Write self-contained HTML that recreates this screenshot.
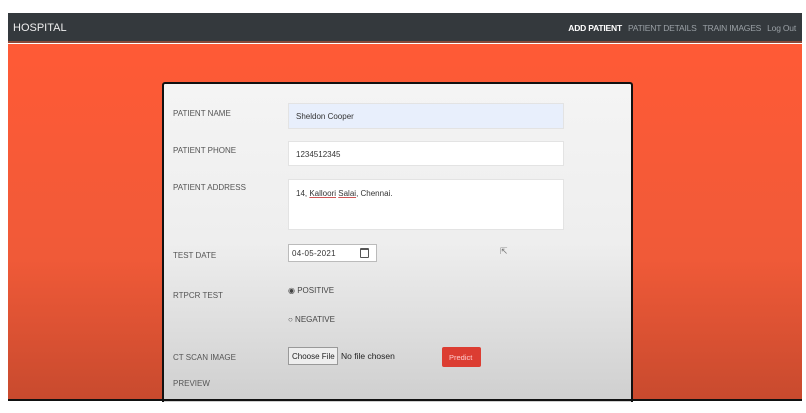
<!DOCTYPE html>
<html><head><style>
*{margin:0;padding:0;box-sizing:border-box}
body{width:806px;height:413px;background:#fff;position:relative;overflow:hidden;font-family:"Liberation Sans",sans-serif}
.nav{position:absolute;left:8px;top:13px;width:794px;height:30px;background:#34393d;border-bottom:2px solid #8a4a3a}
.brand{position:absolute;left:5px;top:9px;color:#eee;font-size:11px}
.links{position:absolute;right:6px;top:10px;font-size:8.5px;color:#9aa0a5;letter-spacing:-0.2px;white-space:nowrap}
.links span{margin-left:6px}
.links b{color:#fff;font-weight:bold}
.bg{position:absolute;left:8px;top:44px;width:794px;height:356px;background:linear-gradient(#ff5a36,#f05a38 60%,#c84a2e)}
.line{position:absolute;left:8px;top:399px;width:794px;height:2px;background:#111}
.card{position:absolute;left:162px;top:82px;width:471px;height:320px;border:2px solid #111;border-bottom:none;border-radius:3px 3px 0 0;background:linear-gradient(#f4f4f4,#eee 50%,#cfcfcf)}
.l{position:absolute;left:173px;font-size:8px;color:#555;white-space:nowrap}
.in{position:absolute;left:288px;width:276px;background:#fff;border:1px solid #e3e3e3;font-size:8px;color:#333;padding:8px 0 0 7px;white-space:nowrap}
.t{position:absolute;font-size:8px;color:#444;white-space:nowrap}
</style></head><body>
<div class="nav"><div class="brand">HOSPITAL</div><div class="links"><b>ADD PATIENT</b><span>PATIENT DETAILS</span><span>TRAIN IMAGES</span><span>Log Out</span></div></div>
<div class="bg"></div>
<div class="card"></div>
<div class="line"></div>
<div class="l" style="top:109px">PATIENT NAME</div>
<div class="in" style="top:103px;height:26px;background:#e8effc;padding-top:8px">Sheldon Cooper</div>
<div class="l" style="top:146px">PATIENT PHONE</div>
<div class="in" style="top:141px;height:25px">1234512345</div>
<div class="l" style="top:183px">PATIENT ADDRESS</div>
<div class="in" style="top:179px;height:51px;padding-top:9px">14, <u style="text-decoration-color:#c55">Kalloori</u> <u style="text-decoration-color:#c55">Salai</u>, Chennai.</div>
<div class="l" style="top:251px">TEST DATE</div>
<div class="in" style="top:244px;width:89px;height:18px;padding:4px 0 0 3px;border-color:#bbb;font-size:8px;letter-spacing:0.3px">04-05-2021<span style="position:absolute;right:7px;top:3px;width:9px;height:10px;border:1.2px solid #555;border-radius:1px;border-top-width:2.5px"></span></div>
<div class="t" style="left:500px;top:246px;color:#777;font-size:9px">⇱</div>
<div class="l" style="top:291px">RTPCR TEST</div>
<div class="t" style="left:288px;top:286px">◉ POSITIVE</div>
<div class="t" style="left:288px;top:315px">○ NEGATIVE</div>
<div class="l" style="top:353px">CT SCAN IMAGE</div>
<div class="t" style="left:288px;top:347px;width:50px;height:18px;border:1px solid #999;background:#eee;padding:4px 0 0 3px;font-size:8px;color:#222">Choose File</div>
<div class="t" style="left:341px;top:351px;font-size:8.5px;color:#222">No file chosen</div>
<div class="t" style="left:442px;top:347px;width:39px;height:20px;background:#dc3d32;border-radius:2px;color:#fcc;padding:6px 0 0 7px;font-size:7.5px">Predict</div>
<div class="l" style="top:379px">PREVIEW</div>
</body></html>
